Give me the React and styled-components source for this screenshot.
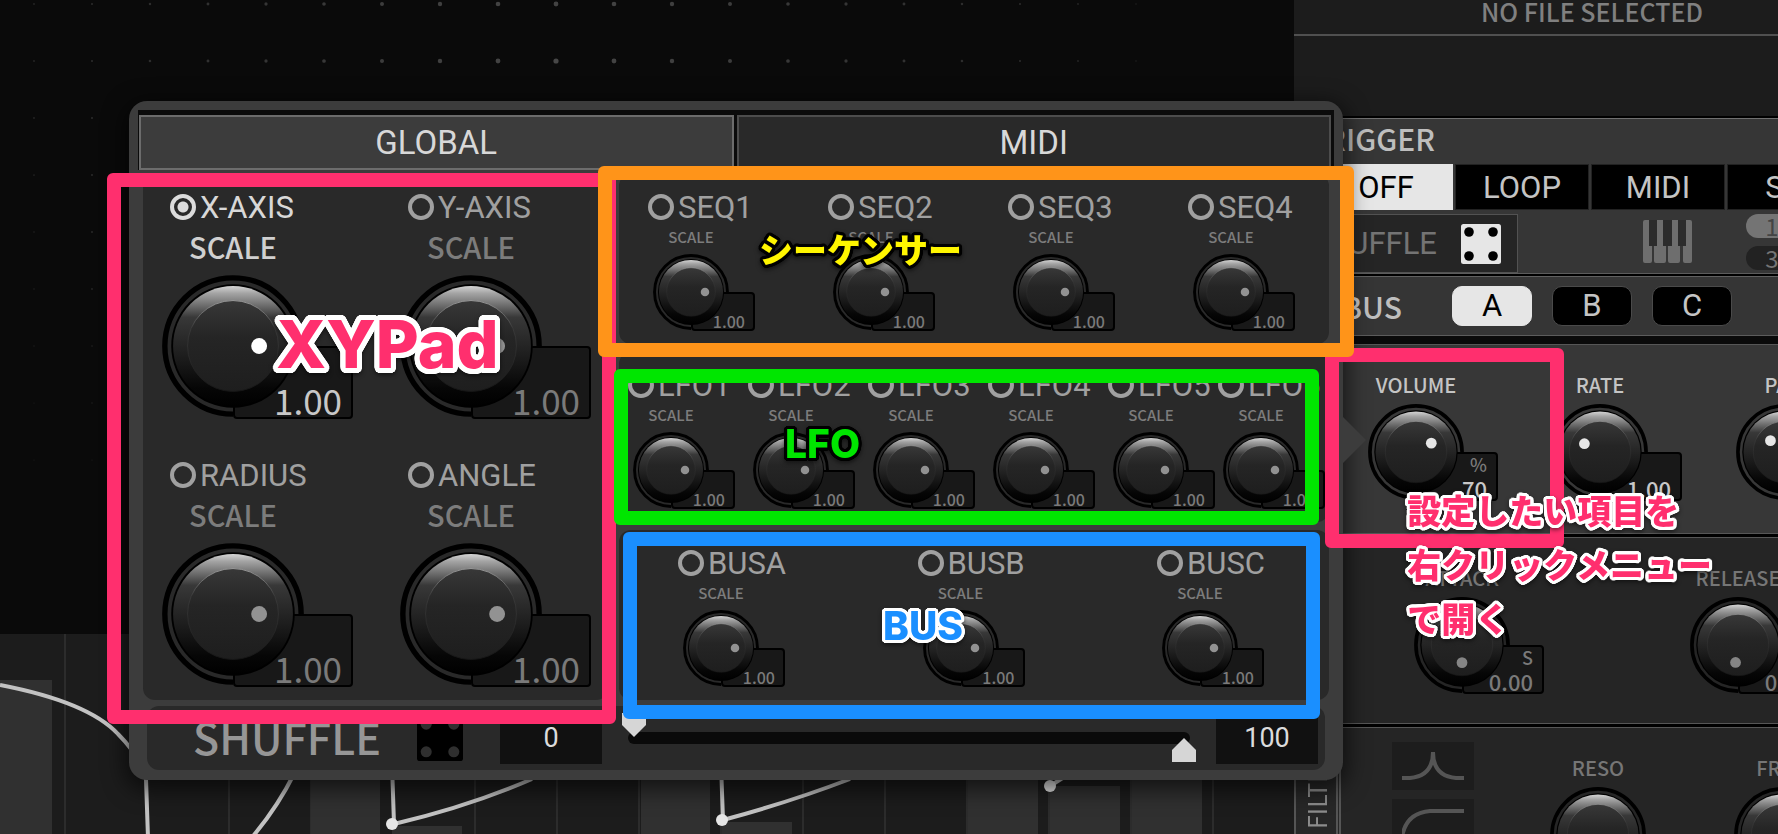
import React from 'react';
import styled, { createGlobalStyle, css } from 'styled-components';

const DIN = "Roboto, 'Liberation Sans', sans-serif";
const HUMANIST = "'Noto Sans CJK JP', 'Noto Sans', sans-serif";

const KNOBS = {
	small: { size: 76, box: 64, height: 39, font: 16, pad: 10, unit: 14 },
	medium: { size: 96, box: 82, height: 49, font: 22, pad: 11, unit: 18 },
	large: { size: 142, box: 120, height: 73, font: 35, pad: 11, unit: 24 },
};

const AXES = ['X-AXIS', 'Y-AXIS', 'RADIUS', 'ANGLE'];
const SEQS = ['SEQ1', 'SEQ2', 'SEQ3', 'SEQ4'];
const LFOS = ['LFO1', 'LFO2', 'LFO3', 'LFO4', 'LFO5', 'LFO6'];
const BUSES = ['BUSA', 'BUSB', 'BUSC'];

const Knob = ({ name, size = 'small', value = '1.00', unit, angle = 0, lit, dot }) => {
	const rad = (angle * Math.PI) / 180;
	return (
		<KnobBody $size={size}>
			<ValueBox $size={size} $lit={lit}>
				{unit && <small>{unit}</small>}
				<span>{value}</span>
			</ValueBox>
			<KnobArt viewBox="0 0 100 100" aria-hidden="true">
				<path d="M98 50A48 48 0 1 0 50 98" fill="none" stroke="#000" strokeWidth="3.8" />
				<circle cx="50" cy="50" r="43.5" fill="#000" />
				<circle cx="50" cy="50" r="42.2" fill="url(#rim)" />
				<circle cx="50" cy="50" r="32" fill="url(#cap)" stroke="url(#capEdge)" strokeWidth="0.7" />
				<circle
					cx={50 + 18.4 * Math.cos(rad)}
					cy={50 + 18.4 * Math.sin(rad)}
					r="5.6"
					fill={dot || '#929292'}
				/>
			</KnobArt>
			<KnobInput type="range" min="0" max="100" defaultValue="70" aria-label={name} />
		</KnobBody>
	);
};

const Source = ({ name, size = 'small', checked }) => (
	<SourceCell $size={size}>
		<SourceLabel $size={size} $lit={checked}>
			<Radio name="source" value={name} defaultChecked={checked} />
			{name}
		</SourceLabel>
		<KnobStack $size={size}>
			<ScaleLabel $size={size} $lit={checked}>
				SCALE
			</ScaleLabel>
			<Knob name={`${name} scale`} size={size} lit={checked} dot={checked && '#fff'} />
		</KnobStack>
	</SourceCell>
);

const Param = ({ label, ...knob }) => (
	<ParamCell>
		<ParamLabel $lit={knob.lit}>{label}</ParamLabel>
		<Knob name={label} size="medium" {...knob} />
	</ParamCell>
);

const Dice = ({ face, pip, size }) => (
	<svg width={size} height={size} viewBox="0 0 40 40" aria-hidden="true">
		<rect width="40" height="40" rx="2.5" fill={face} />
		{[8, 32].map((x) =>
			[8, 32].map((y) => <circle key={`${x}-${y}`} cx={x} cy={y} r="4.8" fill={pip} />)
		)}
	</svg>
);

const Piano = () => (
	<svg width="49" height="43" viewBox="0 0 49 43" aria-hidden="true">
		<rect x="3" width="43" height="26" fill="#2c2c2c" />
		<path
			fill="#6e6e6e"
			d="M2 0h4v26h3v15q0 2-2 2H2q-2 0-2-2V2q0-2 2-2zM14 0h6v26h3v15q0 2-2 2h-8q-2 0-2-2V26h3zM29 0h6v26h2v15q0 2-2 2h-8q-2 0-2-2V26h4zM43 0h4q2 0 2 2v39q0 2-2 2h-5q-2 0-2-2V26h3z"
		/>
	</svg>
);

const DotField = () => {
	const dots = [];
	for (let row = 0; row < 9; row++) {
		for (let col = 0; col < 20; col++) {
			const x = 34 + col * 58;
			const y = 4 + row * 57;
			const near = Math.max(0, 1 - Math.hypot(x - 556, (y - 61) * 1.1) / 620);
			dots.push(
				<circle key={`${x}-${y}`} cx={x} cy={y} r={0.6 + near * 2} fill="#7a7a7a" opacity={0.2 + near * 0.35} />
			);
		}
	}
	return (
		<svg width="100%" height="100%" aria-hidden="true">
			{dots}
		</svg>
	);
};

const STEPS = Array.from({ length: 15 }, (_, i) => 64 + i * 82);
const BARS = [
	[0, 52, 46],
	[311, 69, 0],
	[392, 70, 192],
	[641, 69, 0],
	[722, 70, 188],
	[968, 70, 0],
	[1050, 70, 152],
	[1132, 70, 0],
];

const Envelope = () => (
	<svg width="1294" height="200" aria-hidden="true">
		{STEPS.map((x) => (
			<rect key={x} x={x} width="2" height="200" fill="#2c2c2c" />
		))}
		{BARS.map(([x, w, y]) => (
			<rect key={x} x={x} y={y} width={w} height="200" fill="#303030" />
		))}
		<g fill="none" stroke="#c2c2c2" strokeWidth="4">
			<path d="M0 51Q88 68 118 100Q140 122 146 145L148 204" />
			<path d="M248 208Q276 176 294 140" />
			<path d="M392 130L394 190Q470 172 532 145" />
			<path d="M721 130L723 186Q790 168 850 145" />
			<path d="M1050 152L1072 138" />
		</g>
		<g fill="#e6e6e6">
			<circle cx="392" cy="190" r="6" />
			<circle cx="722" cy="186" r="6" />
			<circle cx="1050" cy="152" r="6" />
		</g>
	</svg>
);

const Gradients = () => (
	<HiddenSvg aria-hidden="true">
		<defs>
			<linearGradient id="rim" x1="0" y1="0" x2="0" y2="1">
				<stop offset="0" stopColor="#d4d4d4" />
				<stop offset="0.06" stopColor="#a4a4a4" />
				<stop offset="0.26" stopColor="#383838" />
				<stop offset="0.6" stopColor="#1c1c1c" />
				<stop offset="0.85" stopColor="#060606" />
				<stop offset="1" stopColor="#000" />
			</linearGradient>
			<linearGradient id="cap" x1="0" y1="0" x2="0" y2="1">
				<stop offset="0" stopColor="#383838" />
				<stop offset="0.4" stopColor="#252525" />
				<stop offset="1" stopColor="#1e1e1e" />
			</linearGradient>
			<linearGradient id="capEdge" x1="0" y1="0" x2="0" y2="1">
				<stop offset="0" stopColor="#9a9a9a" />
				<stop offset="0.3" stopColor="#3a3a3a" />
				<stop offset="1" stopColor="#161616" />
			</linearGradient>
		</defs>
	</HiddenSvg>
);

const Modulation = () => (
	<Popup>
		<Tabs>
			<Tab $active>GLOBAL</Tab>
			<Tab>MIDI</Tab>
		</Tabs>
		<Panels>
			<AxisPanel>
				{AXES.map((name, i) => (
					<Source key={name} name={name} size="large" checked={i === 0} />
				))}
			</AxisPanel>
			<SourceColumn>
				<SourcePanel $left={29} $right={34}>
					{SEQS.map((name) => (
						<Source key={name} name={name} />
					))}
				</SourcePanel>
				<LfoPanel>
					{LFOS.map((name) => (
						<Source key={name} name={name} />
					))}
				</LfoPanel>
				<SourcePanel $left={59} $right={65}>
					{BUSES.map((name) => (
						<Source key={name} name={name} />
					))}
				</SourcePanel>
			</SourceColumn>
		</Panels>
		<ShuffleBar>
			<ShuffleTitle>SHUFFLE</ShuffleTitle>
			<DiceButton aria-label="Randomize">
				<Dice face="#000" pip="#2f2f2f" size={46} />
			</DiceButton>
			<NumberBox defaultValue="0" aria-label="Shuffle minimum" />
			<RangeTrack>
				<RangeThumb type="range" defaultValue="0" aria-label="Minimum" />
				<RangeThumb $up type="range" defaultValue="100" aria-label="Maximum" />
			</RangeTrack>
			<NumberBox defaultValue="100" aria-label="Shuffle maximum" />
		</ShuffleBar>
	</Popup>
);

const Inspector = () => (
	<Side>
		<FileName>NO FILE SELECTED</FileName>
		<WaveSlot />
		<TriggerSection>
			<SectionTitle>TRIGGER</SectionTitle>
			<ModeRow>
				<ModeButton $active>OFF</ModeButton>
				<ModeButton>LOOP</ModeButton>
				<ModeButton>MIDI</ModeButton>
				<ModeButton>SEQ</ModeButton>
			</ModeRow>
			<OptionRow>
				<ShuffleBox>
					SHUFFLE
					<DiceButton aria-label="Shuffle slices">
						<Dice face="#e6e6e6" pip="#000" size={40} />
					</DiceButton>
				</ShuffleBox>
				<Piano />
				<Pills>
					<Pill $active>1</Pill>
					<Pill>3</Pill>
				</Pills>
			</OptionRow>
		</TriggerSection>
		<BusSection>
			<BusTitle>BUS</BusTitle>
			<BusButton $active>A</BusButton>
			<BusButton>B</BusButton>
			<BusButton>C</BusButton>
		</BusSection>
		<Lower>
			<SideTab>FILTER</SideTab>
			<Groups>
				<Group $lit $height={193} $pad={27}>
					<Param label="VOLUME" value="70" unit="%" angle={-30} lit dot="#e6e6e6" />
					<Param label="RATE" angle={-152} lit dot="#e6e6e6" />
					<Param label="PAN" angle={-140} lit dot="#e6e6e6" />
				</Group>
				<Group $height={190} $pad={73} $gap={180}>
					<Param label="ATTACK" value="0.00" unit="S" angle={90} dot="#858585" />
					<Param label="RELEASE" value="0.00" unit="S" angle={98} dot="#858585" />
				</Group>
				<Group $height={107} $pad={51}>
					<FilterShapes>
						<ShapeButton aria-label="Peak">
							<svg width="62" height="28" fill="none" stroke="#555" strokeWidth="4">
								<path d="M0 26H8Q31 24 31 0Q31 24 54 26H62" />
							</svg>
						</ShapeButton>
						<ShapeButton aria-label="High pass">
							<svg width="62" height="28" fill="none" stroke="#555" strokeWidth="4">
								<path d="M0 28Q4 4 28 2H62" />
							</svg>
						</ShapeButton>
					</FilterShapes>
					<Param label="RESO" value="0.00" angle={90} />
					<Param label="FREQ" value="0.00" angle={90} />
				</Group>
			</Groups>
		</Lower>
	</Side>
);

const Notes = () => (
	<Overlay>
		<Frame $color="#ff2f6e" $top={173} $height={551} $left={107} $width={509} />
		<Frame $color="#ff2f6e" $top={348} $height={200} $right={214} $width={239} />
		<Frame $color="#ff9419" $top={166} $height={191} $left={598} $right={424} />
		<Frame $color="#00e600" $top={369} $height={156} $left={614} $right={459} />
		<Frame $color="#1a8fff" $top={532} $height={187} $left={623} $right={458} />
		<Note $color="#ff2f6e" $outline="#fff" $size={66} $stroke={5} $line={80} $left={276} $top={304}>
			XYPad
		</Note>
		<Note $color="#fff600" $outline="#000" $size={34} $stroke={3} $line={40} $left={759} $top={231}>
			シーケンサー
		</Note>
		<Note $color="#00e600" $outline="#000" $size={39} $stroke={3} $line={40} $left={785} $top={424}>
			LFO
		</Note>
		<Note $color="#1a8fff" $outline="#fff" $size={39} $stroke={3} $line={40} $left={883} $top={606}>
			BUS
		</Note>
		<Note $color="#ff2f6e" $outline="#fff" $size={34} $stroke={3} $line={54} $right={66} $top={485}>
			設定したい項目を
			<br />
			右クリックメニュー
			<br />
			で開く
		</Note>
	</Overlay>
);

export default function App() {
	return (
		<Page>
			<GlobalStyle />
			<Gradients />
			<Stage>
				<Field>
					<DotField />
				</Field>
				<Timeline>
					<Envelope />
				</Timeline>
			</Stage>
			<Inspector />
			<Modulation />
			<Notes />
		</Page>
	);
}

const GlobalStyle = createGlobalStyle`
	* {
		box-sizing: border-box;
	}
	body {
		margin: 0;
		background: #0a0a0a;
		overflow: hidden;
	}
	button {
		padding: 0;
		border: 0;
		cursor: pointer;
	}
`;

const HiddenSvg = styled.svg`
	position: absolute;
	width: 0;
	height: 0;
`;

const Page = styled.div`
	position: relative;
	display: grid;
	grid-template-columns: minmax(0, 1fr) 484px;
	min-height: 100vh;
	overflow: hidden;
	font-family: ${HUMANIST};
`;

const Stage = styled.main`
	display: flex;
	flex-direction: column;
	overflow: hidden;
	background: #0a0a0a;
`;

const Field = styled.div`
	height: 634px;
`;

const Timeline = styled.div`
	flex: 1;
	background: #1c1c1c;
	svg {
		display: block;
	}
`;

/* knobs */

const KnobBody = styled.div`
	position: relative;
	width: ${(p) => KNOBS[p.$size].size}px;
	height: ${(p) => KNOBS[p.$size].size}px;
`;

const KnobArt = styled.svg`
	position: relative;
	display: block;
	width: 100%;
	height: 100%;
`;

const KnobInput = styled.input`
	position: absolute;
	inset: 0;
	width: 100%;
	height: 100%;
	margin: 0;
	opacity: 0;
`;

const ValueBox = styled.output`
	position: absolute;
	top: 50%;
	left: 50%;
	display: flex;
	flex-direction: column;
	justify-content: flex-end;
	width: ${(p) => KNOBS[p.$size].box}px;
	height: ${(p) => KNOBS[p.$size].height}px;
	padding-right: ${(p) => KNOBS[p.$size].pad - 2}px;
	border: 2px solid #000;
	border-radius: 4px;
	background: #181818;
	color: ${(p) => (p.$lit ? '#c8c8c8' : '#7a7a7a')};
	font-size: ${(p) => KNOBS[p.$size].font}px;
	font-weight: ${(p) => (p.$size === 'large' ? 400 : 500)};
	line-height: 1;
	text-align: right;

	small {
		color: #7a7a7a;
		font-size: ${(p) => KNOBS[p.$size].unit}px;
		margin-bottom: 4px;
	}
`;

/* modulation popup */

const Popup = styled.section`
	position: absolute;
	top: 101px;
	left: 129px;
	right: 435px;
	padding: 9px 9px 10px;
	border-radius: 18px;
	background: #3c3c3c;
	box-shadow: 0 6px 22px 4px rgba(0, 0, 0, 0.6);

	&::after {
		content: '';
		position: absolute;
		left: 100%;
		top: 316px;
		border: 23px solid transparent;
		border-left-color: #3c3c3c;
		border-right: 0;
	}
`;

const Tabs = styled.nav`
	display: grid;
	grid-template-columns: 1fr 1fr;
	gap: 3px;
	padding: 5px 3px 0 1px;
	background: #0b0b0b;
`;

const Tab = styled.button`
	height: 55px;
	border: 2px solid ${(p) => (p.$active ? '#6c6c6c' : '#4c4c4c')};
	background: ${(p) => (p.$active ? '#3c3c3c' : '#292929')};
	color: #d8d8d8;
	font-family: ${DIN};
	font-size: 33px;
`;

const Panels = styled.div`
	display: grid;
	grid-template-columns: 465px minmax(0, 1fr);
	gap: 11px;
	margin: 4px 5px 6px;
`;

const panel = css`
	border-radius: 12px;
	background: #292929;
`;

const AxisPanel = styled.div`
	${panel}
	display: grid;
	grid-template-columns: 238px 1fr;
	grid-template-rows: 268px 222px;
	padding: 20px 0 16px 19px;
`;

const SourceColumn = styled.div`
	display: grid;
	grid-auto-rows: 1fr;
	gap: 8px;
`;

const SourcePanel = styled.div`
	${panel}
	display: flex;
	justify-content: space-between;
	padding: 20px ${(p) => p.$right}px 0 ${(p) => p.$left}px;
`;

const LfoPanel = styled.div`
	${panel}
	display: grid;
	grid-template-columns: repeat(4, 12fr) 11fr 107px;
	padding: 20px 4px 0 9px;
`;

const SourceCell = styled.div`
	width: ${(p) => (p.$size === 'large' ? 200 : 107)}px;
`;

const SourceLabel = styled.label`
	display: flex;
	align-items: center;
	gap: 4px;
	height: 26px;
	padding-left: ${(p) => (p.$size === 'large' ? 8 : 0)}px;
	color: ${(p) => (p.$lit ? '#d8d8d8' : '#a0a0a0')};
	font-family: ${DIN};
	font-size: 31px;
	white-space: nowrap;
`;

const Radio = styled.input.attrs({ type: 'radio' })`
	appearance: none;
	flex: none;
	width: 26px;
	height: 26px;
	margin: 0;
	border: 4px solid currentColor;
	border-radius: 50%;
	color: #a0a0a0;

	&:checked {
		color: #dcdcdc;
		background: radial-gradient(currentColor 5px, transparent 6px);
	}
`;

const KnobStack = styled.div`
	display: flex;
	flex-direction: column;
	align-items: center;
	width: ${(p) => KNOBS[p.$size].size}px;
	margin-left: ${(p) => (p.$size === 'large' ? 0 : 5)}px;
`;

const ScaleLabel = styled.span`
	margin: ${(p) => (p.$size === 'large' ? '8px 0 11px' : '7px 0 7px')};
	color: ${(p) => (p.$lit ? '#d0d0d0' : '#7c7c7c')};
	font-size: ${(p) => (p.$size === 'large' ? 29 : 15)}px;
	font-weight: 500;
	line-height: ${(p) => (p.$size === 'large' ? 36 : 20)}px;
`;

const ShuffleBar = styled.div`
	${panel}
	display: flex;
	align-items: center;
	height: 64px;
	margin: 0 9px;
	padding: 0 7px 0 46px;
`;

const ShuffleTitle = styled.span`
	width: 224px;
	padding-bottom: 4px;
	color: #969696;
	font-size: 43px;
	font-weight: 500;
	line-height: 60px;
`;

const DiceButton = styled.button`
	display: flex;
	background: none;
`;

const NumberBox = styled.input`
	width: 102px;
	height: 51px;
	border: 0;
	background: #111;
	color: #dcdcdc;
	font-family: ${DIN};
	font-size: 27px;
	text-align: center;

	${DiceButton} + & {
		margin-left: 37px;
	}
`;

const RangeTrack = styled.div`
	position: relative;
	flex: 1;
	height: 12px;
	margin: 0 26px;
	border-radius: 6px;
	background: #0a0a0a;
`;

const RangeThumb = styled.input`
	position: absolute;
	left: -6px;
	top: ${(p) => (p.$up ? 6 : -19)}px;
	width: calc(100% + 12px);
	height: 24px;
	margin: 0;
	appearance: none;
	background: none;
	pointer-events: none;

	&::-webkit-slider-thumb {
		appearance: none;
		width: 24px;
		height: 24px;
		background: #d6d6d6;
		clip-path: ${(p) =>
			p.$up
				? 'polygon(50% 0, 100% 50%, 100% 100%, 0 100%, 0 50%)'
				: 'polygon(0 0, 100% 0, 100% 50%, 50% 100%, 0 50%)'};
		pointer-events: auto;
	}
`;

/* inspector */

const Side = styled.aside`
	display: flex;
	flex-direction: column;
	background: #1c1c1c;
	overflow: hidden;
`;

const FileName = styled.div`
	height: 36px;
	padding-left: 187px;
	border-bottom: 2px solid #505050;
	color: #808080;
	font-size: 25px;
	font-weight: 500;
	line-height: 22px;
	white-space: nowrap;
`;

const WaveSlot = styled.div`
	height: 80px;
`;

const TriggerSection = styled.section`
	height: 158px;
	border-top: 2px solid #000;
	border-bottom: 1px solid #5c5c5c;
	box-shadow: inset 0 1px #707070;
	background: #363636;
`;

const SectionTitle = styled.h2`
	margin: 0;
	height: 46px;
	padding-left: 14px;
	color: #bebebe;
	font-size: 30px;
	font-weight: 500;
	line-height: 40px;
`;

const ModeRow = styled.div`
	display: flex;
	gap: 2px;
	padding-left: 25px;
`;

const ModeButton = styled.button`
	flex: none;
	width: 134px;
	height: 46px;
	border: 1px solid ${(p) => (p.$active ? '#e6e6e6' : '#222')};
	background: ${(p) => (p.$active ? '#e6e6e6' : '#000')};
	color: ${(p) => (p.$active ? '#000' : '#c4c4c4')};
	font-family: ${DIN};
	font-size: 31px;
`;

const OptionRow = styled.div`
	display: flex;
	align-items: center;
	height: 63px;
	svg {
		flex: none;
	}
`;

const ShuffleBox = styled.div`
	display: flex;
	flex: none;
	align-items: center;
	justify-content: flex-end;
	gap: 24px;
	align-self: flex-end;
	width: 224px;
	height: 59px;
	margin-right: 125px;
	padding-right: 16px;
	border: 1px solid #525252;
	background: #252525;
	color: #747474;
	font-family: ${DIN};
	font-size: 31px;
`;

const Pills = styled.div`
	display: grid;
	flex: none;
	gap: 8px;
	margin-left: 54px;
`;

const Pill = styled.button`
	width: 52px;
	height: 24px;
	border-radius: 12px;
	background: ${(p) => (p.$active ? '#747474' : '#222')};
	color: ${(p) => (p.$active ? '#444' : '#747474')};
	font-family: ${HUMANIST};
	font-size: 24px;
	line-height: 22px;
`;

const BusSection = styled.section`
	display: flex;
	align-items: center;
	gap: 20px;
	height: 62px;
	border-top: 2px solid #000;
	border-bottom: 1px solid #5c5c5c;
	box-shadow: inset 0 1px #606060;
	background: #353535;
`;

const BusTitle = styled.h2`
	width: 138px;
	margin: 0;
	padding-left: 48px;
	color: #bebebe;
	font-size: 30px;
	font-weight: 500;
	line-height: 40px;
`;

const BusButton = styled.button`
	width: 80px;
	height: 40px;
	border: 1px solid ${(p) => (p.$active ? '#e6e6e6' : '#4a4a4a')};
	border-radius: 10px;
	background: ${(p) => (p.$active ? '#e6e6e6' : '#000')};
	color: ${(p) => (p.$active ? '#000' : '#c4c4c4')};
	font-family: ${DIN};
	font-size: 31px;
`;

const Lower = styled.div`
	display: grid;
	grid-template-columns: 47px 1fr;
	flex: 1;
	border-top: 8px solid #0a0a0a;
`;

const SideTab = styled.button`
	writing-mode: vertical-rl;
	transform: rotate(180deg);
	border: 1px solid #555;
	border-width: 0 2px 0 5px;
	border-left-style: double;
	background: #272727;
	color: #8c8c8c;
	font-family: ${HUMANIST};
	font-size: 25px;
	text-align: left;
	padding-top: 5px;
`;

const Groups = styled.div`
	min-width: 0;
`;

const Group = styled.div`
	display: flex;
	gap: ${(p) => p.$gap || 88}px;
	height: ${(p) => p.$height}px;
	padding: 28px 0 0 ${(p) => p.$pad}px;
	border-top: 1px solid #565656;
	box-shadow: inset 0 -3px #000, inset 0 -4px #565656;
	background: ${(p) => (p.$lit ? '#373737' : '#252525')};

	&:last-child {
		box-shadow: none;
	}
`;

const ParamCell = styled.div`
	display: flex;
	flex-direction: column;
	align-items: center;
	flex: none;
	width: 96px;
`;

const ParamLabel = styled.span`
	margin-bottom: 7px;
	color: ${(p) => (p.$lit ? '#c4c4c4' : '#767676')};
	font-size: 20px;
	font-weight: 500;
	line-height: 24px;
`;

const FilterShapes = styled.div`
	display: grid;
	gap: 9px;
	flex: none;
	align-content: start;
	width: 82px;
	margin: -14px -12px 0 0;
`;

const ShapeButton = styled.button`
	display: grid;
	place-items: center;
	height: 48px;
	background: #1d1d1d;
`;

/* callouts drawn over the plugin */

const Overlay = styled.div`
	position: absolute;
	inset: 0;
	pointer-events: none;
`;

const place = css`
	position: absolute;
	top: ${(p) => p.$top}px;
	left: ${(p) => (p.$left ? `${p.$left}px` : 'auto')};
	right: ${(p) => (p.$right ? `${p.$right}px` : 'auto')};
`;

// ring of hard shadows, gives the letters a rounded outline
const outline = (radius, color) =>
	Array.from({ length: 32 }, (_, i) => {
		const a = (i * Math.PI) / 16;
		return `${(radius * Math.cos(a)).toFixed(2)}px ${(radius * Math.sin(a)).toFixed(2)}px 0 ${color}`;
	}).join(', ');

const Frame = styled.div`
	${place}
	width: ${(p) => (p.$width ? `${p.$width}px` : 'auto')};
	height: ${(p) => p.$height}px;
	border: 14px solid ${(p) => p.$color};
	border-radius: 6px;
`;

const Note = styled.p`
	${place}
	margin: 0;
	color: ${(p) => p.$color};
	font-family: Inter, 'Noto Sans CJK JP', sans-serif;
	font-size: ${(p) => p.$size}px;
	font-weight: 800;
	line-height: ${(p) => p.$line}px;
	white-space: nowrap;
	text-shadow: ${(p) => outline(p.$stroke, p.$outline)};
	filter: drop-shadow(0 2px 2px rgba(0, 0, 0, 0.5));
`;
